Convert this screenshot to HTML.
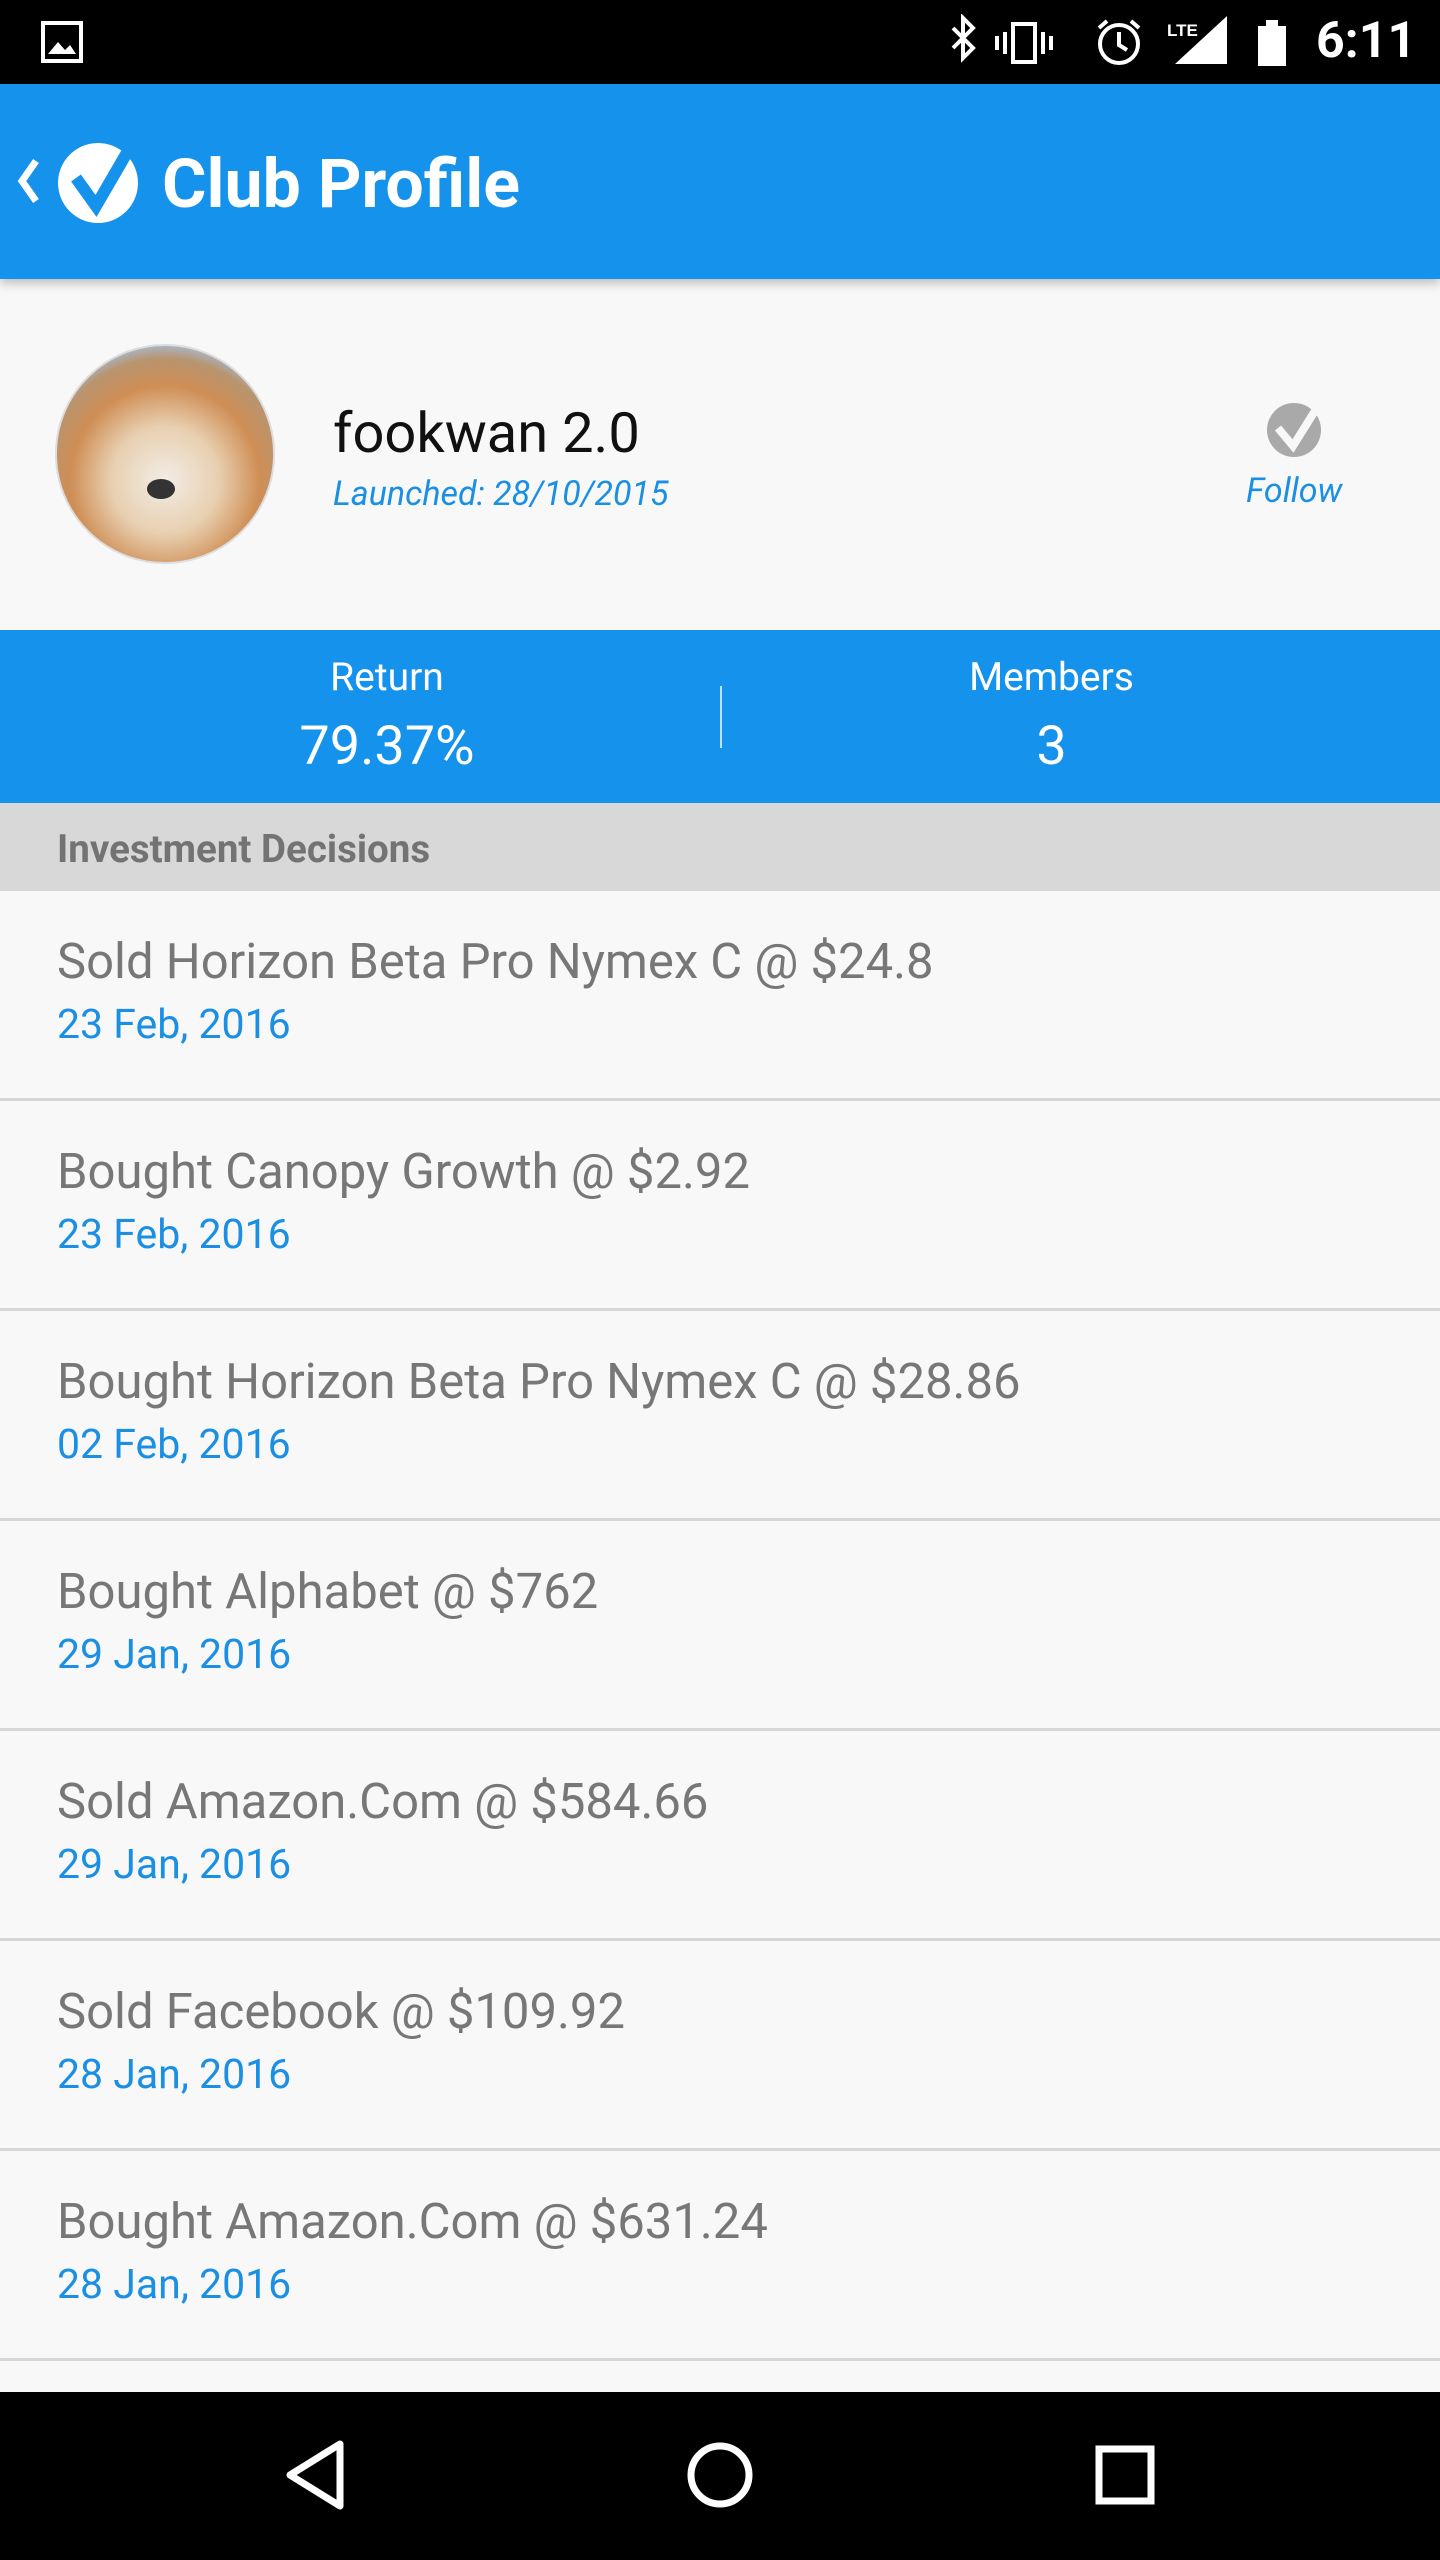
<!DOCTYPE html>
<html><head><meta charset="utf-8"><style>
*{margin:0;padding:0;box-sizing:border-box}
body{width:1440px;height:2560px;background:#f8f8f8;font-family:"Roboto","Liberation Sans",sans-serif;position:relative;overflow:hidden}
.abs{position:absolute}
.status{left:0;top:0;width:1440px;height:84px;background:#000}
.bar{left:0;top:84px;width:1440px;height:195px;background:#1592ec;box-shadow:0 4px 10px rgba(0,0,0,.25);z-index:2}
.stats{left:0;top:630px;width:1440px;height:173px;background:#1592ec;color:#fff}
.sec{left:0;top:803px;width:1440px;height:88px;background:#d8d8d8;color:#737373;font-weight:bold;font-size:38.5px;padding-left:57px;line-height:94px}
.row{left:0;width:1440px;height:210px;border-bottom:3px solid #d6d6d6}
.t{position:absolute;left:57px;top:42px;font-size:49px;color:#777}
.d{position:absolute;left:57px;top:110px;font-size:41px;color:#1a8fe3}
.nav{left:0;top:2392px;width:1440px;height:168px;background:#000}
</style></head><body>
<div class="abs status">
 <svg class="abs" style="left:40px;top:20px" width="44" height="44" viewBox="0 0 44 44"><rect x="3" y="3" width="38" height="38" fill="none" stroke="#fff" stroke-width="4"/><path d="M8 34 L18 22 L25 30 L30 25 L36 34Z" fill="#fff"/></svg>
 <svg class="abs" style="left:945px;top:14px" width="460" height="56" viewBox="0 0 460 56">
  <path d="M8 14 L28 34 L18 44 V4 L28 14 L8 34" fill="none" stroke="#fff" stroke-width="4"/>
  <rect x="68" y="10" width="22" height="38" fill="none" stroke="#fff" stroke-width="4"/><rect x="58" y="18" width="4" height="22" fill="#fff"/><rect x="96" y="18" width="4" height="22" fill="#fff"/><rect x="50" y="22" width="4" height="14" fill="#fff"/><rect x="104" y="22" width="4" height="14" fill="#fff"/>
  <circle cx="174" cy="30" r="19" fill="none" stroke="#fff" stroke-width="4"/><path d="M174 18 V31 L182 36" fill="none" stroke="#fff" stroke-width="4"/><path d="M154 14 L162 7 M194 14 L186 7" stroke="#fff" stroke-width="4"/>
  <text x="222" y="22" fill="#fff" font-size="17" font-weight="bold" font-family="Liberation Sans">LTE</text>
  <path d="M230 50 L282 50 L282 2Z" fill="#fff"/>
  <rect x="313" y="12" width="28" height="40" fill="#fff"/><rect x="321" y="6" width="12" height="6" fill="#fff"/>
 </svg>
 <div class="abs" style="left:1316px;top:12px;color:#fff;font-size:50px;font-weight:bold">6:11</div>
</div>
<div class="abs bar">
 <svg class="abs" style="left:14px;top:72px" width="28" height="50" viewBox="0 0 28 50"><path d="M22 5 L8 25 L22 45" fill="none" stroke="#fff" stroke-width="7"/></svg>
 <svg class="abs" style="left:54px;top:52px" width="90" height="90" viewBox="0 0 90 90"><circle cx="44" cy="47" r="40" fill="#fff"/><path d="M22 42 L42 70 L78 8" fill="none" stroke="#1592ec" stroke-width="12"/></svg>
 <div class="abs" style="left:162px;top:60px;color:#fff;font-size:68px;font-weight:bold">Club Profile</div>
</div>
<svg class="abs" style="left:55px;top:344px" width="220" height="220" viewBox="0 0 220 220"><defs><radialGradient id="g" cx="50%" cy="62%" r="62%"><stop offset="0" stop-color="#f2ede6"/><stop offset=".4" stop-color="#e8cfb0"/><stop offset=".7" stop-color="#cf8e55"/><stop offset=".9" stop-color="#b8946f"/><stop offset="1" stop-color="#a9b6c6"/></radialGradient></defs><circle cx="110" cy="110" r="109" fill="url(#g)" stroke="#ddd" stroke-width="2"/><ellipse cx="106" cy="145" rx="14" ry="10" fill="#333"/></svg>
<div class="abs" style="left:333px;top:400px;font-size:56px;color:#111">fookwan 2.0</div>
<div class="abs" style="left:333px;top:474px;font-size:34px;color:#1a8fe3;font-style:italic">Launched: 28/10/2015</div>
<svg class="abs" style="left:1266px;top:400px" width="58" height="58" viewBox="0 0 58 58"><circle cx="28" cy="30" r="27" fill="#a9a9a9"/><path d="M12 28 L27 46 L52 6" fill="none" stroke="#f8f8f8" stroke-width="8"/></svg>
<div class="abs" style="left:1246px;top:471px;font-size:34px;color:#1a8fe3;font-style:italic">Follow</div>
<div class="abs stats">
 <div class="abs" style="left:0;width:774px;top:24px;text-align:center;font-size:39px">Return</div>
 <div class="abs" style="left:0;width:774px;top:85px;text-align:center;font-size:54px">79.37%</div>
 <div class="abs" style="left:720px;top:56px;width:2px;height:62px;background:#bfe0fa"></div>
 <div class="abs" style="left:720px;width:663px;top:24px;text-align:center;font-size:39px">Members</div>
 <div class="abs" style="left:720px;width:663px;top:85px;text-align:center;font-size:54px">3</div>
</div>
<div class="abs sec">Investment Decisions</div>
<div class="abs row" style="top:891px"><div class="t">Sold Horizon Beta Pro Nymex C @ $24.8</div><div class="d">23 Feb, 2016</div></div>
<div class="abs row" style="top:1101px"><div class="t">Bought Canopy Growth @ $2.92</div><div class="d">23 Feb, 2016</div></div>
<div class="abs row" style="top:1311px"><div class="t">Bought Horizon Beta Pro Nymex C @ $28.86</div><div class="d">02 Feb, 2016</div></div>
<div class="abs row" style="top:1521px"><div class="t">Bought Alphabet @ $762</div><div class="d">29 Jan, 2016</div></div>
<div class="abs row" style="top:1731px"><div class="t">Sold Amazon.Com @ $584.66</div><div class="d">29 Jan, 2016</div></div>
<div class="abs row" style="top:1941px"><div class="t">Sold Facebook @ $109.92</div><div class="d">28 Jan, 2016</div></div>
<div class="abs row" style="top:2151px"><div class="t">Bought Amazon.Com @ $631.24</div><div class="d">28 Jan, 2016</div></div>
<div class="abs nav">
 <svg class="abs" style="left:0;top:0" width="1440" height="168" viewBox="0 0 1440 168"><path d="M340 52 L340 114 L290 83Z" fill="none" stroke="#fff" stroke-width="7" stroke-linejoin="round"/><circle cx="720" cy="83" r="29" fill="none" stroke="#fff" stroke-width="7"/><rect x="1099" y="57" width="52" height="52" fill="none" stroke="#fff" stroke-width="7"/></svg>
</div>
</body></html>
